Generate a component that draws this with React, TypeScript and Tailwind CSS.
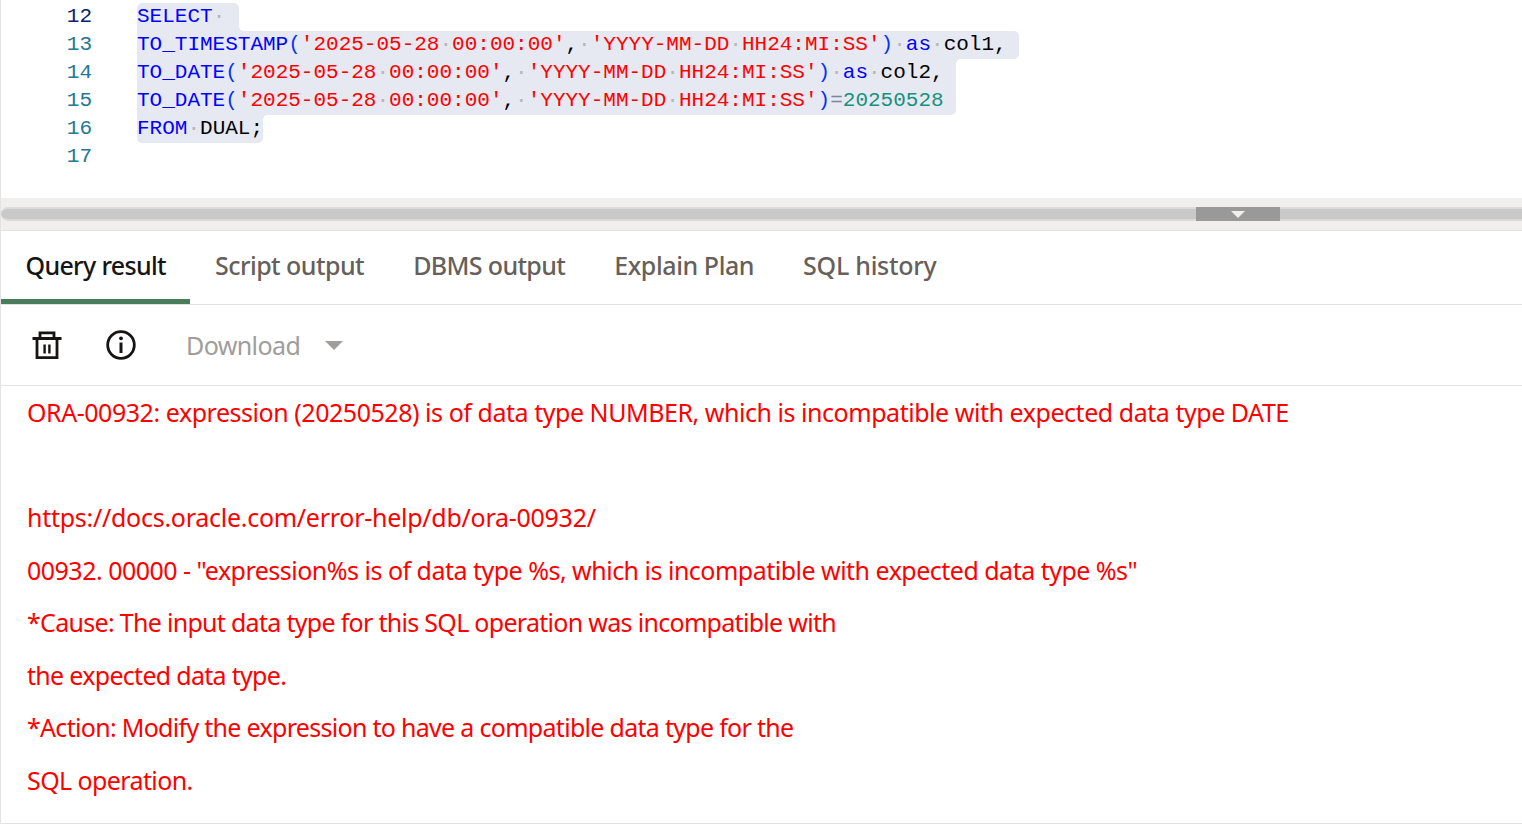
const kw = "text-[#0000ff]";
const str = "text-[#ff0000]";
const paren = "text-[#0431fa]";
const dot = "text-[#b4b7bc]";

function Sp() {
  return <span className={dot}>·</span>;
}

function DateCall({ name }: { name: string }) {
  return (
    <>
      <span className={kw}>{name}</span>
      <span className={paren}>(</span>
      <span className={str}>
        '2025-05-28<Sp />00:00:00'
      </span>
      <span className="text-black">,</span>
      <Sp />
      <span className={str}>
        'YYYY-MM-DD<Sp />HH24:MI:SS'
      </span>
      <span className={paren}>)</span>
    </>
  );
}

const fillet = "absolute left-full h-[5px] w-[5px]";

const lines = [
  {
    no: 12,
    numCls: "text-[#0b216f]",
    cls: "w-[102px] rounded-t-[5px]",
    fillet: "bottom-0 bg-[radial-gradient(circle_at_100%_0,transparent_5px,#e6e9f1_5px)]",
    code: (
      <>
        <span className={kw}>SELECT</span>
        <Sp />
      </>
    ),
  },
  {
    no: 13,
    numCls: "text-[#237893]",
    cls: "w-[882px] rounded-r-[5px]",
    fillet: "",
    code: (
      <>
        <DateCall name="TO_TIMESTAMP" />
        <Sp />
        <span className={kw}>as</span>
        <Sp />
        <span className="text-black">col1,</span>
      </>
    ),
  },
  {
    no: 14,
    numCls: "text-[#237893]",
    cls: "w-[819px]",
    fillet: "top-0 bg-[radial-gradient(circle_at_100%_100%,transparent_5px,#e6e9f1_5px)]",
    code: (
      <>
        <DateCall name="TO_DATE" />
        <Sp />
        <span className={kw}>as</span>
        <Sp />
        <span className="text-black">col2,</span>
      </>
    ),
  },
  {
    no: 15,
    numCls: "text-[#237893]",
    cls: "w-[819px] rounded-br-[5px]",
    fillet: "",
    code: (
      <>
        <DateCall name="TO_DATE" />
        <span className="text-[#778899]">=</span>
        <span className="text-[#16917f]">20250528</span>
      </>
    ),
  },
  {
    no: 16,
    numCls: "text-[#237893]",
    cls: "w-[126px] rounded-b-[5px]",
    fillet: "top-0 bg-[radial-gradient(circle_at_100%_100%,transparent_5px,#e6e9f1_5px)]",
    code: (
      <>
        <span className={kw}>FROM</span>
        <Sp />
        <span className="text-black">DUAL;</span>
      </>
    ),
  },
  { no: 17, numCls: "text-[#237893]", cls: "", fillet: "", code: null },
];

const tabs = [
  { label: "Query result", cls: "tracking-[-0.67px]" },
  { label: "Script output", cls: "tracking-[-0.54px]" },
  { label: "DBMS output", cls: "tracking-[-0.64px]" },
  { label: "Explain Plan", cls: "tracking-[-0.42px]" },
  { label: "SQL history", cls: "tracking-[-0.27px]" },
];

const errors = [
  {
    text: "ORA-00932: expression (20250528) is of data type NUMBER, which is incompatible with expected data type DATE",
    cls: "tracking-[-0.46px]",
  },
  { text: "", cls: "" },
  { text: "https://docs.oracle.com/error-help/db/ora-00932/", cls: "tracking-[-0.27px]" },
  {
    text: '00932. 00000 - "expression%s is of data type %s, which is incompatible with expected data type %s"',
    cls: "tracking-[-0.51px]",
  },
  {
    text: "*Cause: The input data type for this SQL operation was incompatible with",
    cls: "tracking-[-0.7px]",
  },
  { text: "the expected data type.", cls: "tracking-[-0.7px]" },
  {
    text: "*Action: Modify the expression to have a compatible data type for the",
    cls: "tracking-[-0.7px]",
  },
  { text: "SQL operation.", cls: "tracking-[-0.6px]" },
];

function TrashIcon() {
  return (
    <svg width="30" height="30" viewBox="0 0 30 30" fill="none" stroke="#161513" strokeWidth="2.8">
      <path d="M0.5 8.5h29M8 8.5V2.8h14v5.7M5 8.5v19.2h20V8.5" />
      <path d="M12.6 14.5v9M17.4 14.5v9" strokeWidth="2.4" />
    </svg>
  );
}

function InfoIcon() {
  return (
    <svg width="30" height="30" viewBox="0 0 30 30" fill="none" stroke="#161513" strokeWidth="2.8">
      <circle cx="15" cy="15" r="13.3" />
      <path d="M15 12.5v10.5" strokeWidth="3" />
      <circle cx="15" cy="8.3" r="1.9" fill="#161513" stroke="none" />
    </svg>
  );
}

export default function App() {
  return (
    <div className="h-[824px] w-[1522px] overflow-hidden border-b border-l border-[#e4e3e1] bg-white font-['Noto_Sans',sans-serif]">
      {/* Editor */}
      <div className="h-[198px] pt-[3px] font-['Liberation_Mono',monospace] text-[21px] leading-[28px]">
        {lines.map((line) => (
          <div key={line.no} className="flex h-[28px]">
            <div className={`w-[91px] text-right ${line.numCls}`}>{line.no}</div>
            <div className={`relative ml-[45px] h-[28px] whitespace-pre bg-[#e6e9f1] ${line.cls}`}>
              {line.code}
              {line.fillet && <div className={`${fillet} ${line.fillet}`} />}
            </div>
          </div>
        ))}
      </div>

      {/* Splitter */}
      <div className="flex h-[33px] items-center border-b border-[#e4e3e1] bg-[#f0efed]">
        <div className="flex h-[14px] w-full rounded-l-[7px] border-y-2 border-[#dcdbd9] bg-[#c9c9c9]">
          <div className="w-[1195px]" />
          <div className="-my-[2px] flex h-[14px] w-[84px] justify-center bg-[#999999] pt-[4px]">
            <div className="h-0 w-0 border-x-[7px] border-t-[7px] border-x-transparent border-t-[#f0efed]" />
          </div>
        </div>
      </div>

      {/* Tabs */}
      <div className="flex h-[74px] border-b border-[#e4e3e1]">
        {tabs.map((tab, i) => (
          <div
            key={tab.label}
            className={`flex h-[73px] items-center px-[24.5px] text-[25px] font-medium ${tab.cls} ${
              i === 0 ? "border-b-[5px] border-[#4a7d5c] pt-[1px] text-[#161513]" : "pb-[4px] text-[#665f5b]"
            }`}
          >
            {tab.label}
          </div>
        ))}
      </div>

      {/* Toolbar */}
      <div className="flex h-[81px] items-center border-b border-[#e4e3e1] pl-[31px]">
        <TrashIcon />
        <div className="ml-[44px]">
          <InfoIcon />
        </div>
        <span className="ml-[50px] pt-[2px] text-[25px] tracking-[-0.6px] text-[#a09d9a]">Download</span>
        <div className="ml-[25px] h-0 w-0 border-x-[9px] border-t-[9px] border-x-transparent border-t-[#a09d9a]" />
      </div>

      {/* Error output */}
      <div className="pl-[26px] text-[25px] leading-[52.5px] text-[#ff0000]">
        {errors.map((line, i) => (
          <p key={i} className={`h-[52.5px] whitespace-pre ${line.cls}`}>
            {line.text}
          </p>
        ))}
      </div>
    </div>
  );
}
